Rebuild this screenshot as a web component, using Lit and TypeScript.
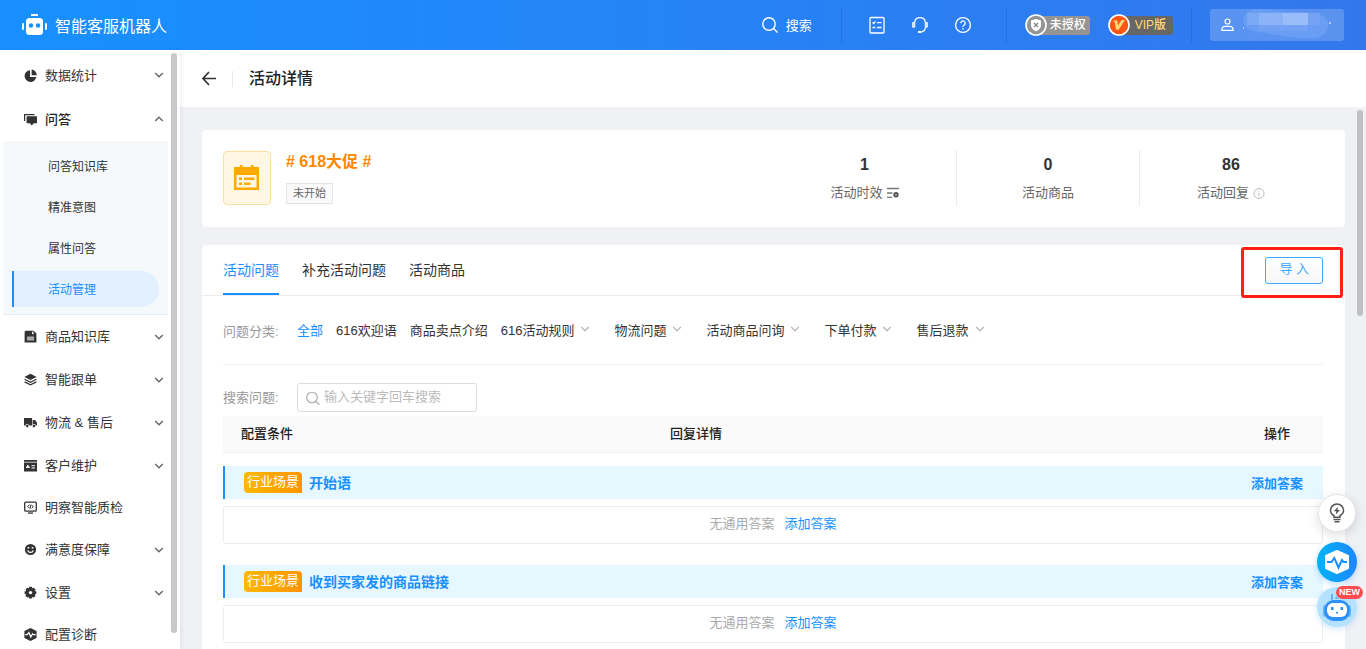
import { LitElement, html, svg, css, nothing } from "lit";
import { customElement, state } from "lit/decorators.js";
import { classMap } from "lit/directives/class-map.js";

const menuIcons: Record<string, unknown> = {
  stats: svg`<path d="M6 1.2A5.9 5.9 0 1 0 12.3 8H6z"/><path d="M7.6.6v5.6h5.2A5.6 5.6 0 0 0 7.600.6z"/>`,
  chat: svg`<path d="M0 1h10.500v1.200H1.200V8H0z"/><path d="M2.600 3.200H13v7H9.800L7.800 12.400 5.800 10.200H2.600z"/>`,
  goods: svg`<path d="M1.500.8h8L12.400 3.500v8.900H.6V1.700z"/><path fill="#aaa" d="M3 6.500h7v4H3z"/><path fill="#fff" d="M8 1.800h1.500v2.400H8z"/>`,
  layers: svg`<path d="M6.500.8 12.600 3.900 6.500 7 .4 3.900z"/><path fill="none" stroke="#333" stroke-width="1.200" d="M.6 6.300l5.900 3 5.900-3M.6 8.900l5.900 3 5.900-3"/>`,
  truck: svg`<path d="M0 2h8v7.500H0zM8.600 4H11l2 2.700v2.800H8.600z"/><circle cx="3.200" cy="10" r="1.700" stroke="#fff" stroke-width=".7"/><circle cx="10" cy="10" r="1.700" stroke="#fff" stroke-width=".7"/>`,
  card: svg`<path d="M0 1h13v1.700H0zM0 3.600h13v8.800H0z"/><path fill="#fff" d="M3 6h1.500v1.500h1.200V9H2V7.500h1zM7.500 6.200H11v1H7.500zM7.500 8.600H11v1H7.500z"/>`,
  monitor: svg`<rect x=".7" y="1.200" width="11.600" height="9" rx="1" fill="none" stroke="#333" stroke-width="1.300"/><path d="M4 11.400h5v1.300H4z"/><path fill="none" stroke="#333" stroke-width="1" d="M5.400 3.700 3.800 5.300l1.700 1.900M7.600 3.900l1.600 1.900-1.600 1.500M6.900 3.600 6.100 7.700"/>`,
  smile: svg`<circle cx="6.500" cy="6.500" r="5.600"/><path fill="#fff" d="M3.600 4h1.700v1.600H3.600zM7.700 4h1.700v1.600H7.700z"/><path fill="none" stroke="#fff" stroke-width="1.200" d="M3.700 7.300a2.900 2.900 0 0 0 5.600 0"/>`,
  gear: svg`<path d="M5.200.8h2.600l.5 1.500 1.500-.6 1.700 1.800-.6 1.500 1.500.5v2.300l-1.500.6.6 1.500-1.700 1.700-1.500-.6-.5 1.500H5.200L4.700 11l-1.500.6-1.700-1.700.6-1.500-1.500-.6V5.500L2.100 5l-.6-1.500 1.700-1.800 1.500.6z"/><circle cx="6.500" cy="6.600" r="1.700" fill="#fff"/>`,
  diagnose: svg`<path d="M6.500 0 12.600 3v7L6.500 13 .4 10V3z"/><path fill="none" stroke="#fff" stroke-width="1.200" d="M1.300 6.700h2L4.900 4.500 6.800 9l1.700-3.200.7.900h2.500"/>`,
};

interface MenuEntry { icon: string; label: string; leaf?: boolean; open?: boolean; children?: string[] }

const menu: MenuEntry[] = [
  { icon: "stats", label: "数据统计" },
  { icon: "chat", label: "问答", open: true, children: ["问答知识库", "精准意图", "属性问答", "活动管理"] },
  { icon: "goods", label: "商品知识库" },
  { icon: "layers", label: "智能跟单" },
  { icon: "truck", label: "物流 & 售后" },
  { icon: "card", label: "客户维护" },
  { icon: "monitor", label: "明察智能质检", leaf: true },
  { icon: "smile", label: "满意度保障" },
  { icon: "gear", label: "设置" },
  { icon: "diagnose", label: "配置诊断", leaf: true },
];

const categories = [
  { label: "全部" },
  { label: "616欢迎语" },
  { label: "商品卖点介绍" },
  { label: "616活动规则", more: true },
  { label: "物流问题", more: true },
  { label: "活动商品问询", more: true },
  { label: "下单付款", more: true },
  { label: "售后退款", more: true },
];

const chevron = (up = false) => html`<svg class="chevron" width="10" height="10" viewBox="0 0 10 10" fill="none" stroke="currentColor" stroke-width="1.400" aria-hidden="true"><path d=${up ? "M1.200 7 5 3.200 8.800 7" : "M1.200 3 5 6.800 8.800 3"} /></svg>`;

const base = css`
  * { box-sizing: border-box; }
  button { font: inherit; color: inherit; background: none; border: 0; padding: 0; margin: 0; cursor: pointer; }
  a { color: inherit; text-decoration: none; }
  svg { display: block; flex: none; }
`;

@customElement("top-header")
class TopHeader extends LitElement {
  static styles = [base, css`
    :host { display: flex; align-items: center; height: 50px; padding: 0 22px; color: #fff; background: linear-gradient(90deg, #1890ff, #3377ec); font-size: 13px; }
    .brand { display: flex; align-items: center; gap: 8px; margin-right: auto; font-size: 16px; }
    .search { display: flex; align-items: center; gap: 8px; margin-right: 29px; }
    .search span { padding-bottom: 2px; }
    .rule { width: 1px; height: 36px; background: rgba(0, 40, 130, 0.14); }
    .tools { display: flex; gap: 27px; margin: 0 35px 0 27px; }
    .badges { display: flex; gap: 18px; margin: 0 18px; }
    .badge { display: flex; align-items: center; font-size: 12px; }
    .badge svg { z-index: 1; }
    .tag { height: 19px; line-height: 19px; margin-left: -10px; padding: 0 4px 0 13px; border-radius: 3px; background: #949494; font-weight: 500; }
    .vip .tag { background: #666; color: #ffd977; padding: 0 7px 0 15px; }
    .user { display: flex; align-items: center; gap: 8px; margin-left: 18px; width: 134px; height: 32px; padding: 0 11px; border-radius: 3px; background: rgba(255, 255, 255, 0.2); }
  `];

  render() {
    return html`
      <div class="brand">
        <svg width="25" height="22" viewBox="0 0 25 22" fill="#fff"><rect x="9" y="0" width="7" height="2" rx=".6"/><rect x="4" y="4" width="17" height="17" rx="3.500"/><rect x="0" y="9" width="2" height="7" rx="1"/><rect x="23" y="9" width="2" height="7" rx="1"/><circle cx="9" cy="11.500" r="2.200" fill="#1890ff"/><circle cx="16" cy="11.500" r="2.200" fill="#1890ff"/></svg>
        <span>智能客服机器人</span>
      </div>
      <button class="search">
        <svg width="16" height="18" viewBox="0 0 16 18" fill="none" stroke="#fff" stroke-width="1.400"><circle cx="7" cy="8" r="6.200"/><path d="M11.500 12.500 15.600 16.600"/></svg>
        <span>搜索</span>
      </button>
      <span class="rule"></span>
      <div class="tools">
        <button aria-label="任务清单"><svg width="16" height="18" viewBox="0 0 16 18" fill="none" stroke="#fff" stroke-width="1.300"><rect x="1" y="1.500" width="14" height="15.500" rx="1"/><path d="M3.500 6.500 4.700 7.600 6.500 5.300M3.500 11.500h2.800M8 6.700h4.500M8 11.500h4.500"/></svg></button>
        <button aria-label="在线客服"><svg width="16" height="18" viewBox="0 0 16 18" fill="none" stroke="#fff" stroke-width="1.300"><path d="M2.600 6.500C3 3.300 5.200 1.700 8 1.700s5 1.600 5.400 4.800M13.400 11.500c-.3 2.600-1.500 4-4 4.300"/><path fill="#cfe2ff" stroke-width=".8" d="M.6 6.500h2.200v4.700H.6zM13.200 6.500h2.200v4.700h-2.200z"/><path stroke-width="2" d="M6 16h3.500"/></svg></button>
        <button aria-label="帮助"><svg width="16" height="18" viewBox="0 0 16 18" fill="none" stroke="#fff" stroke-width="1.300"><circle cx="8" cy="9" r="7.400"/><path d="M5.800 7.200A2.200 2.200 0 1 1 9.200 9c-.8.5-1.200.8-1.200 1.700M8 11.900v1.500"/></svg></button>
      </div>
      <span class="rule"></span>
      <div class="badges">
        <div class="badge"><svg width="22" height="22" viewBox="0 0 22 22"><circle cx="11" cy="11" r="10" fill="#949494" stroke="#fff" stroke-width="1.600"/><path fill="#fff" d="M11 5l5 1.500v4.800c0 2.800-2.200 4.800-5 5.900-2.800-1.100-5-3.100-5-5.900V6.500z"/><path stroke="#888" stroke-width="1.400" d="M9 9l4 4M13 9l-4 4"/></svg><span class="tag">未授权</span></div>
        <div class="badge vip"><svg width="22" height="22" viewBox="0 0 22 22"><circle cx="11" cy="11" r="10" fill="#ff5514" stroke="#fff" stroke-width="1.600"/><path fill="#ffd977" d="M5 6.500h4.200l.8 5L13.500 6H17l-6.300 9.800H8L6.800 8.200z"/></svg><span class="tag">VIP版</span></div>
      </div>
      <span class="rule"></span>
      <button class="user" aria-label="账号">
        <svg width="13" height="14" viewBox="0 0 13 14" fill="none" stroke="#fff" stroke-width="1.200"><circle cx="6.500" cy="3.500" r="2.500"/><path d="M.8 12.400c0-2.800 1.500-4 3.500-4h4.400c2 0 3.500 1.200 3.500 4z"/></svg>
        <svg width="90" height="32" viewBox="0 0 90 32"><path fill="#6a9df4" d="M2 8C3 3 9 0 18 0c12 1 20 3 34 3 18 0 32 1 34 10 1 8-3 15-13 16-18 1-35-2-50-5C7 22-1 19 2 8z"/><path fill="#7baaf5" d="M5 4h12v12H5z"/><path fill="#8cb3f6" d="M17 4h24v12H17z"/><path fill="#9abcf8" d="M41 4h25v12H41z"/><path fill="#75a3f4" d="M66 4h12v12H66z"/><path fill="#73a2f4" d="M17 16h48v6H17z"/><path stroke="#fff" d="M88 15v-2M1 19h1"/></svg>
      </button>
    `;
  }
}

@customElement("side-menu")
class SideMenu extends LitElement {
  @state() private current = "活动管理";

  static styles = [base, css`
    :host { display: flex; width: 180px; padding: 3px 3px 0 3px; background: #fff; box-shadow: 1px 0 5px rgba(0, 20, 60, 0.08); font-size: 13px; color: #333; z-index: 1; }
    .list { flex: 1; margin-right: 3px; }
    .row { display: flex; align-items: center; width: 100%; height: 43px; padding: 0 4px 0 21px; gap: 8px; text-align: left; }
    .row.leaf { height: 41px; }
    .row.tall { height: 44px; }
    .row.open { font-weight: 500; color: #222; }
    .row span { flex: 1; padding-bottom: 2px; }
    .chevron { color: #666; }
    .sub { display: flex; flex-direction: column; gap: 5px; padding: 7px 9px; background: #f5f9fc; border-bottom: 1px solid #e4ecf6; }
    .item { height: 36px; padding: 0 0 2px 34px; border-left: 2px solid transparent; text-align: left; font-size: 12px; }
    .item.on { color: #1890ff; background: #e2f0ff; border-color: #1890ff; border-radius: 0 18px 18px 0; }
    .thumb { width: 6px; height: 580px; border-radius: 3px; background: #c8c8c8; }
  `];

  render() {
    return html`
      <nav class="list">
        ${menu.map((m, i) => html`
          <button class=${classMap({ row: true, leaf: !!m.leaf, tall: i < 2, open: !!m.open })}>
            <svg width="13" height="13" viewBox="0 0 13 13" fill="#333">${menuIcons[m.icon]}</svg>
            <span>${m.label}</span>
            ${m.leaf ? nothing : chevron(m.open)}
          </button>
          ${m.children ? html`<div class="sub">${m.children.map((c) => html`
            <button class=${classMap({ item: true, on: c === this.current })} @click=${() => (this.current = c)}>${c}</button>`)}
          </div>` : nothing}
        `)}
      </nav>
      <div class="thumb"></div>
    `;
  }
}

@customElement("activity-summary")
class ActivitySummary extends LitElement {
  static styles = [base, css`
    :host { display: flex; align-items: center; height: 97px; padding: 0 23px 2px 21px; background: #fff; border-radius: 4px; }
    .cover { display: flex; align-items: center; justify-content: center; width: 48px; height: 54px; border: 1px solid #ffdf9f; border-radius: 4px; background: #fff6e4; }
    .info { display: flex; flex-direction: column; align-items: flex-start; justify-content: space-between; height: 52px; margin-left: 15px; margin-right: auto; }
    h2 { margin: 0; font-size: 16px; line-height: 20px; font-weight: 700; color: #ff8800; }
    .tag { height: 21px; line-height: 19px; padding: 0 6px; border: 1px solid #e4e4e4; background: #fafafa; color: #666; font-size: 11px; }
    .stat { display: flex; flex-direction: column; align-items: center; gap: 7px; width: 183px; height: 56px; padding-top: 4px; }
    .stat + .stat { border-left: 1px solid #ebebeb; }
    .num { font-size: 16px; line-height: 22px; font-weight: 700; color: #333; }
    .label { display: flex; align-items: center; gap: 4px; font-size: 13px; line-height: 20px; color: #666; }
  `];

  render() {
    return html`
      <div class="cover"><svg width="26" height="26" viewBox="0 0 26 26"><path fill="#fa0" d="M6 0h2.500v2H17V0h2.500v2H25v23H0V2h6z"/><path fill="#fff6e4" d="M2.500 10h20v12.500h-20z"/><path fill="#fa0" d="M5 12.500h3V15H5zM10 12.500h10.500V15H10zM5 17.500h3V20H5zM10 17.500h6.500V20H10z"/></svg></div>
      <div class="info"><h2># 618大促 #</h2><span class="tag">未开始</span></div>
      <div class="stat"><span class="num">1</span><span class="label">活动时效<svg width="12" height="12" viewBox="0 0 12 12" fill="none" stroke="#777" stroke-width="1.300"><path d="M0 1.500h12M0 6h5.500M0 10.300h5"/><circle cx="9" cy="7.800" r="2.700" fill="#555" stroke="none"/><circle cx="9" cy="7.800" r=".7" fill="#fff" stroke="none"/></svg></span></div>
      <div class="stat"><span class="num">0</span><span class="label">活动商品</span></div>
      <div class="stat"><span class="num">86</span><span class="label">活动回复<svg width="12" height="12" viewBox="0 0 12 12" fill="none" stroke="#bbb"><circle cx="6" cy="6.500" r="5"/><path d="M6 5.500v4M6 3.500v1.100"/></svg></span></div>
    `;
  }
}

@customElement("question-panel")
class QuestionPanel extends LitElement {
  @state() private tab = 0;
  @state() private category = 0;
  private scenes = ["开始语", "收到买家发的商品链接"];

  static styles = [base, css`
    :host { display: block; min-height: 404px; background: #fff; border-radius: 4px 4px 0 0; font-size: 13px; color: #333; }
    .tabs { display: flex; gap: 23px; height: 51px; padding: 0 22px 0 21px; border-bottom: 1px solid #eee; font-size: 14px; }
    .tab { height: 50px; border-bottom: 2px solid transparent; }
    .tab.on { color: #1890ff; border-color: #1890ff; }
    .import { position: relative; margin: 12px 0 0 auto; height: 27px; }
    .import button { height: 27px; padding: 0 13px 4px; border: 1px solid #40a9ff; border-radius: 3px; background: linear-gradient(#fff, #f7f7f7); color: #40a9ff; font-size: 13px; line-height: 21px; }
    .import::after { content: ""; position: absolute; inset: -10px -20px -14px -24px; border: 3px solid #ff1f14; border-radius: 3px; pointer-events: none; }
    .body { padding: 0 22px 0 21px; }
    .filter { display: flex; align-items: center; height: 69px; border-bottom: 1px solid #f2f2f2; }
    .name { width: 74px; color: #999; }
    .cats { display: flex; align-items: center; gap: 13px; padding-bottom: 2px; }
    .cat { display: flex; align-items: center; gap: 6px; }
    .cat.more { margin-right: 11px; }
    .cat.on { color: #1890ff; }
    .cat .chevron { color: #bbb; }
    .query { display: flex; align-items: center; padding: 18px 0 4px; }
    .query .name { padding-bottom: 3px; }
    .field { display: flex; align-items: center; gap: 4px; width: 180px; height: 29px; padding: 0 8px; border: 1px solid #dcdcdc; border-radius: 3px; }
    input { flex: 1; min-width: 0; border: 0; outline: 0; padding: 0 0 2px; background: none; font: inherit; }
    input::placeholder { color: #bbb; opacity: 1; }
    table { width: 100%; border-spacing: 0; table-layout: fixed; }
    td { padding: 0; }
    thead th { height: 37px; padding: 0 18px 4px; text-align: left; font-weight: 500; color: #222; background: #fafafa; border-bottom: 1px solid #f0f0f0; white-space: nowrap; }
    .c1 { width: 39%; }
    .c3 { width: 77px; }
    .bar { display: flex; align-items: center; gap: 7px; height: 33px; margin-top: 21px; padding: 0 20px 0 19px; border-left: 2px solid #1890ff; background: #e6f7ff; color: #1890ff; }
    .first .bar { margin-top: 13px; }
    .kind { height: 21px; line-height: 19px; padding: 0 3px; border-radius: 4px 4px 0 4px; background: linear-gradient(90deg, #ffb800, #ff9500); color: #fff; }
    h3 { margin: 0 auto 0 0; padding-bottom: 2px; font-size: 14px; font-weight: 700; }
    .bar a { font-weight: 700; }
    .empty { display: flex; align-items: center; justify-content: center; gap: 10px; height: 38px; margin-top: 7px; padding-bottom: 5px; border: 1px solid #ececec; border-radius: 3px; color: #aaa; }
    .empty a { color: #1890ff; }
  `];

  render() {
    return html`
      <div class="tabs">
        ${["活动问题", "补充活动问题", "活动商品"].map((t, i) => html`<button class=${classMap({ tab: true, on: i === this.tab })} @click=${() => (this.tab = i)}>${t}</button>`)}
        <div class="import"><button>导 入</button></div>
      </div>
      <div class="body">
        <div class="filter">
          <span class="name">问题分类:</span>
          <div class="cats">
            ${categories.map((c, i) => html`<button class=${classMap({ cat: true, more: !!c.more, on: i === this.category })} @click=${() => (this.category = i)}>${c.label}${c.more ? chevron() : nothing}</button>`)}
          </div>
        </div>
        <div class="query">
          <label class="name" for="q">搜索问题:</label>
          <div class="field">
            <svg width="14" height="14" viewBox="0 0 14 14" fill="none" stroke="#aaa" stroke-width="1.100"><circle cx="6" cy="6.500" r="5.300"/><path d="M9.800 10.300 13.300 13.700"/></svg>
            <input id="q" type="text" placeholder="输入关键字回车搜索" />
          </div>
        </div>
        <table>
          <thead><tr><th class="c1">配置条件</th><th>回复详情</th><th class="c3">操作</th></tr></thead>
          <tbody>
            ${this.scenes.map((s, i) => html`
              <tr class=${classMap({ first: i === 0 })}><td colspan="3"><div class="bar"><span class="kind">行业场景</span><h3>${s}</h3><a href="#">添加答案</a></div></td></tr>
              <tr><td colspan="3"><div class="empty"><span>无通用答案</span><a href="#">添加答案</a></div></td></tr>`)}
          </tbody>
        </table>
      </div>
    `;
  }
}

@customElement("float-tools")
class FloatTools extends LitElement {
  static styles = [base, css`
    :host { position: absolute; right: 9px; bottom: 22px; z-index: 2; display: flex; flex-direction: column; align-items: center; }
    button { display: flex; align-items: center; justify-content: center; width: 40px; height: 40px; border-radius: 50%; }
    .tips { width: 38px; height: 38px; margin-bottom: 10px; background: #fff; border: 1px solid #e6e6e6; box-shadow: 0 3px 12px rgba(0, 0, 0, 0.14); }
    .pulse { margin-bottom: 5px; background: linear-gradient(90deg, #00b4f5, #1f87ff); box-shadow: 0 2px 6px rgba(24, 144, 255, 0.3); }
    .robot { position: relative; background: #b5e3ff; box-shadow: 0 2px 6px rgba(24, 144, 255, 0.2); }
    .new { position: absolute; top: -1px; left: 19px; height: 13px; line-height: 13px; padding: 0 3px; border-radius: 7px; background: #ff4d4f; color: #fff; font-size: 9px; font-weight: 700; }
  `];

  render() {
    return html`
      <button class="tips" aria-label="提示"><svg width="16" height="20" viewBox="0 0 16 20" fill="none" stroke="#555" stroke-width="1.500"><path d="M5 14.300v-1.800C2.600 11.400 1.500 9.700 1.500 7.500a6.500 6.500 0 0 1 13 0c0 2.200-1.100 3.900-3.500 5v1.800z"/><path d="M4.500 16.500h7M5.500 18.800h5"/><path fill="#555" stroke="none" d="M9 3.800 4.800 8.300h2.500L6.800 11.500l4.300-4.600H8.500z"/></svg></button>
      <button class="pulse" aria-label="诊断"><svg width="26" height="26" viewBox="0 0 26 26"><path fill="#fff" stroke="#fff" stroke-width="2" stroke-linejoin="round" d="M13 2 24 7v12l-11 5L2 19V7z"/><path fill="none" stroke="#1690ff" stroke-width="2" d="M3 13h4.500L10.300 9l4.200 9.500L18 11l1.500 2H23"/></svg></button>
      <button class="robot" aria-label="机器人"><svg width="28" height="30" viewBox="0 0 28 30"><path fill="#65b6f7" d="M8 2h2v6H8zM13 4l3 3h-4z"/><rect x="0" y="13" width="28" height="12" rx="3" fill="#62b3ff"/><rect x="1.500" y="8" width="25" height="21" rx="9" fill="#2b90f7"/><rect x="4" y="11" width="20" height="14" rx="6" fill="#fff"/><path fill="#2b90f7" d="M8 15h2.500v3H8zM17.500 15H20v3h-2.500zM13 20h2v1.500h-2z"/></svg><span class="new">NEW</span></button>
    `;
  }
}

@customElement("app-root")
class AppRoot extends LitElement {
  static styles = [base, css`
    :host { display: flex; flex-direction: column; position: relative; height: 100vh; overflow: hidden; font-family: "Liberation Sans", "Noto Sans CJK SC", sans-serif; background: #f0f1f5; }
    .shell { display: flex; flex: 1; min-height: 0; }
    main { position: relative; flex: 1; min-width: 0; overflow: hidden; }
    .title { display: flex; align-items: center; height: 57px; padding-left: 21px; background: #fff; }
    .rule { width: 1px; height: 16px; margin: 0 16px; background: #e8e8e8; }
    h1 { margin: 0; padding-bottom: 3px; font-size: 16px; font-weight: 500; color: #222; }
    .content { display: flex; flex-direction: column; gap: 18px; padding: 23px 21px 0 22px; }
    .thumb { position: absolute; top: 60px; right: 3px; width: 6px; height: 206px; border-radius: 3px; background: #c1c1c1; }
  `];

  render() {
    return html`
      <top-header></top-header>
      <div class="shell">
        <side-menu></side-menu>
        <main>
          <div class="title">
            <button aria-label="返回"><svg width="15" height="15" viewBox="0 0 15 15" fill="none" stroke="#333" stroke-width="1.700"><path d="M8 1 2 7.500l6 6.500M2 7.500h13"/></svg></button>
            <span class="rule"></span>
            <h1>活动详情</h1>
          </div>
          <div class="content">
            <activity-summary></activity-summary>
            <question-panel></question-panel>
          </div>
          <div class="thumb"></div>
        </main>
      </div>
      <float-tools></float-tools>
    `;
  }
}
